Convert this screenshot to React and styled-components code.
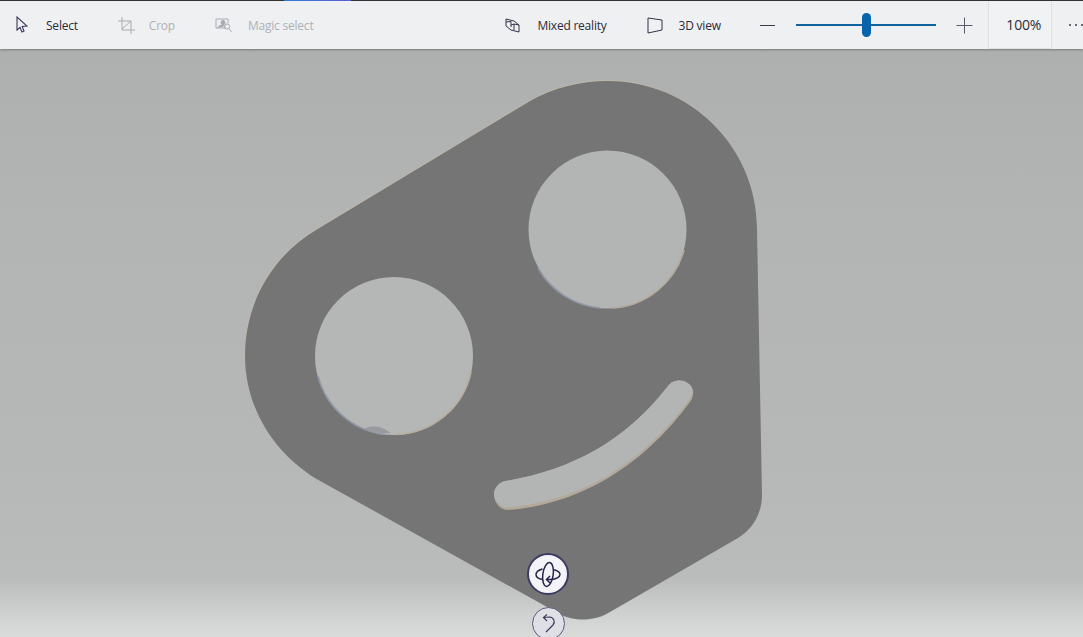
import React from "react";
import styled, { createGlobalStyle } from "styled-components";

const Global = createGlobalStyle`
  html, body { margin: 0; height: 100%; overflow: hidden; }
  #root { height: 100%; }
`;

const Page = styled.div`
  position: relative;
  width: 1083px;
  height: 637px;
  overflow: hidden;
  display: flex;
  flex-direction: column;
  font-family: "Open Sans", "Noto Sans", sans-serif;
`;

const Toolbar = styled.header`
  position: relative;
  z-index: 2;
  height: 48px;
  flex: none;
  display: flex;
  align-items: center;
  background: #eff0f2;
  border-top: 1px solid #333;
  box-shadow: 0 1px 2px rgba(60, 60, 60, 0.45);
`;

const Accent = styled.div`
  position: absolute;
  top: -1px;
  left: 284px;
  width: 67px;
  height: 1px;
  background: linear-gradient(90deg, #2f7fd6, #5b5fd0);
`;

const Tool = styled.div`
  display: flex;
  align-items: center;
  gap: ${(p) => p.$gap}px;
  margin-left: ${(p) => p.$left}px;
  font-size: 12px;
  letter-spacing: -0.22px;
  color: ${(p) => (p.$disabled ? "#aeb0b8" : "#2b2b3c")};
  svg { display: block; flex: none; }
`;

const Zoom = styled.div`
  display: flex;
  align-items: center;
  margin-left: 38px;
`;

const ZoomButton = styled.svg`
  display: block;
  width: 17px;
  height: 17px;
  flex: none;
`;

const Slider = styled.div`
  position: relative;
  width: 140px;
  height: 2px;
  margin: 0 20px;
  background: #0f639f;
`;

const Thumb = styled.div`
  position: absolute;
  left: 66px;
  top: -11px;
  width: 9px;
  height: 24px;
  border-radius: 5px;
  background: #0863ad;
`;

const Percent = styled.div`
  width: 64px;
  height: 47px;
  margin-left: 15px;
  box-sizing: border-box;
  display: flex;
  align-items: center;
  justify-content: center;
  padding-left: 8px;
  background: #f1f2f3;
  border: 1px solid #dfe0e2;
  border-top: none;
  font-size: 14px;
  color: #2d2d3a;
  letter-spacing: -0.2px;
`;

const More = styled.div`
  margin-left: 17px;
  display: flex;
  gap: 4px;
  span {
    width: 2px;
    height: 2px;
    flex: none;
    background: #3c3c48;
    border-radius: 50%;
  }
`;

const Canvas = styled.main`
  position: relative;
  flex: 1;
  background: linear-gradient(
    180deg,
    #aeb0af 0%,
    #b3b5b4 30%,
    #b6b8b7 70%,
    #babcbb 90%,
    #cfd0d0 96%,
    #dadbdb 100%
  );
`;

const Model = styled.svg`
  display: block;
  position: absolute;
  left: 0;
  top: 0;
`;

const OrbitButton = styled.button`
  position: absolute;
  left: 527px;
  top: 504px;
  width: 42px;
  height: 42px;
  padding: 0;
  box-sizing: border-box;
  border-radius: 50%;
  border: 2px solid #3c3c62;
  background: #f3f3f8;
  display: flex;
  align-items: center;
  justify-content: center;
`;

const ResetButton = styled.button`
  position: absolute;
  left: 532px;
  top: 558px;
  width: 33px;
  height: 33px;
  padding: 0;
  box-sizing: border-box;
  border-radius: 50%;
  border: 1.5px solid #5a5a80;
  background: #dfe0e6;
  display: flex;
  align-items: center;
  justify-content: center;
`;

// outline is written in page coordinates, the viewBox takes off the toolbar
const outline =
  "M530 101 C552 88 580 81 608 81 C690 81 757 147 757 229 L762 495 C762 513 753 529 738 538 L610 612 C592 623 570 621 556 612 L322 482 C276 457 245 409 245 356 C245 304 271 257 316 230 Z";

const Part = () => (
  <Model width="1083" height="588" viewBox="0 49 1083 588">
    <path d={outline} fill="#c2b9a9" transform="translate(-0.5 -0.7)" />
    <path d={outline} fill="#757575" />

    {/* rim seen through the holes */}
    <circle cx="607.5" cy="229.5" r="79" fill="#b3b5b4" />
    <path d="M538 268 A79 79 0 0 0 600 308" fill="none" stroke="#8f97a6" strokeWidth="1.6" />
    <path d="M612 308 A79 79 0 0 0 684 250" fill="none" stroke="#b5ab9b" strokeWidth="1.6" />

    <circle cx="394" cy="356" r="79" fill="#b5b7b6" />
    <path d="M318 376 A79 79 0 0 0 385 434.5" fill="none" stroke="#8f99a8" strokeWidth="1.6" />
    <path d="M396 434.5 A79 79 0 0 0 471 372" fill="none" stroke="#b8ad9c" strokeWidth="1.6" />
    <path d="M364 429 C372 424 382 426 391 433 C382 434 372 432 364 429 Z" fill="#999aa0" />

    {/* curved slot */}
    <path
      d="M668 386 C672 380 682 378 689 384 C695 389 694 396 690 402 C640 470 575 505 508 510 C500 510 495 503 494 496 C494 488 499 482 506 481 C570 470 625 442 668 386 Z"
      fill="#b3a999"
    />
    <path
      d="M668 386 C672 380 682 378 689 384 C694 388 693 394 689 400 C640 467 575 503 505 507.5 C498 505 494 499 494 494 C494 488 499 482 506 481 C570 470 625 442 668 386 Z"
      fill="#b3b5b4"
    />
  </Model>
);

export default function App() {
  return (
    <Page>
      <Global />
      <Toolbar>
        <Accent />
        <Tool $left={16} $gap={18}>
          <svg width="12" height="18" viewBox="0 0 12 18" fill="none" stroke="#3a3a58" strokeWidth="1.1">
            <path d="M1 1 L1 14 L4 11.5 L6 16 L8 15 L6.2 10.5 L11 10 Z" />
          </svg>
          Select
        </Tool>
        <Tool $left={40} $gap={14} $disabled>
          <svg width="17" height="17" viewBox="0 0 17 17" fill="none" stroke="#a9abb3" strokeWidth="1">
            <path d="M4 0 V13 H17 M0 4 H13 V17 M4 12 L13 4" />
          </svg>
          Crop
        </Tool>
        <Tool $left={40} $gap={16} $disabled>
          <svg width="17" height="15" viewBox="0 0 17 15" fill="none" stroke="#a9abb3" strokeWidth="1">
            <path d="M11 10 H1 V1 H13 V5" />
            <circle cx="8" cy="4.5" r="2" fill="#a9abb3" />
            <path d="M3 10 C3.5 7.5 6 7 8 7 C9 7 10 7.5 10.5 8" fill="#a9abb3" />
            <circle cx="12" cy="8.5" r="2.6" />
            <path d="M14 10.5 L16.5 14" />
          </svg>
          Magic select
        </Tool>
        <Tool $left={192} $gap={17}>
          <svg width="15" height="15" viewBox="0 0 15 15" fill="none" stroke="#33334a" strokeWidth="1">
            <path d="M1 1 L9 3 L14 7 V14 L6 12 L1 8 Z" />
            <path d="M1 4 L6 3.5 L6 9 M9 6 L14 7 M6 7 L9 6 V12" />
          </svg>
          Mixed reality
        </Tool>
        <Tool $left={40} $gap={16}>
          <svg width="16" height="17" viewBox="0 0 16 17" fill="none" stroke="#33334a" strokeWidth="1">
            <path d="M1 1 L15 3 V13 L1 16 Z" />
          </svg>
          3D view
        </Tool>
        <Zoom>
          <ZoomButton viewBox="0 0 17 17" stroke="#3a3a4c" strokeWidth="1">
            <path d="M1 8.5 H16" />
          </ZoomButton>
          <Slider>
            <Thumb />
          </Slider>
          <ZoomButton viewBox="0 0 17 17" stroke="#5a5a6c" strokeWidth="1">
            <path d="M0.5 8.5 H16.5 M8.5 0.5 V16.5" />
          </ZoomButton>
        </Zoom>
        <Percent>100%</Percent>
        <More>
          <span />
          <span />
          <span />
        </More>
      </Toolbar>
      <Canvas>
        <Part />
        <OrbitButton aria-label="Orbit">
          <svg width="26" height="27" viewBox="0 0 26 27" fill="none" stroke="#25254a" strokeWidth="1.5">
            <ellipse cx="13" cy="13.5" rx="5.2" ry="12" transform="rotate(8 13 13.5)" />
            <path d="M7.5 8 C3.8 9 1 11 1 13.5 C1 16 4 18 8 18.6" />
            <path d="M19 8.8 C22.8 9.8 25 11.4 25 13.5 C25 16 21 18.2 16 18.5 L11.5 18.5" />
            <path d="M15 15 L11.5 18.5 L15 22" />
          </svg>
        </OrbitButton>
        <ResetButton aria-label="Reset">
          <svg width="18" height="20" viewBox="0 0 18 20" fill="none" stroke="#3c3c5c" strokeWidth="1.2">
            <path d="M6 18 L13 11 C15.5 8 14 3.5 9.5 3 L3.5 3.5" />
            <path d="M7 0.5 L3.5 3.5 L7 7" />
          </svg>
        </ResetButton>
      </Canvas>
    </Page>
  );
}
